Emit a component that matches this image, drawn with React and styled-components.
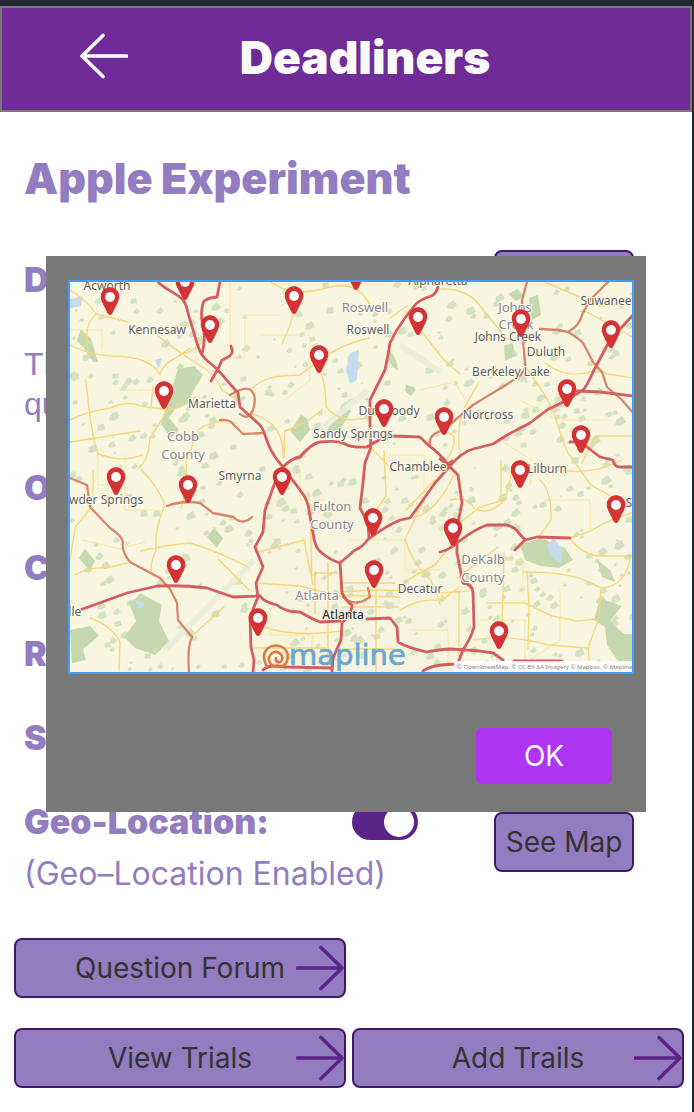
import React from "react";
import styled, { createGlobalStyle } from "styled-components";

const GlobalStyle = createGlobalStyle`
  *, *::before, *::after { box-sizing: border-box; }
  body {
    margin: 0;
    background: #222733;
    font-family: Inter, "Liberation Sans", sans-serif;
  }
`;

const Frame = styled.div`
  position: relative;
  min-height: 100vh;
  padding: 6px 2px 0 0;
  display: flex;
  flex-direction: column;
  background: #222733;
`;

const Header = styled.header`
  display: flex;
  align-items: center;
  height: 106px;
  padding: 0 88px 0 78px;
  border: 2px solid #797979;
  background: #6f2c99;
`;

const BackButton = styled.button`
  display: flex;
  padding: 0 0 6px;
  border: 0;
  background: none;
  color: #fff;
`;

const Brand = styled.div`
  flex: 1;
  padding-bottom: 4px;
  text-align: center;
  font-size: 46px;
  line-height: 56px;
  font-weight: 900;
  color: #fbfafa;
`;

const Page = styled.main`
  flex: 1;
  display: flex;
  flex-direction: column;
  padding-bottom: 24px;
  background: #fff;
  color: #937cbf;
`;

const Title = styled.h1`
  margin: 0;
  padding: 42px 24px 0;
  font-size: 43px;
  line-height: 48px;
  font-weight: 900;
`;

const Details = styled.section`
  display: flex;
  flex-direction: column;
  padding: 48px 58px 0 24px;
`;

const Row = styled.div`
  display: flex;
  align-items: center;
  justify-content: space-between;
  height: ${(p) => p.$height || 84}px;
`;

const Results = styled.div`
  padding: 4px 0 22px;
`;

const Label = styled.span`
  font-size: 34px;
  line-height: 40px;
  font-weight: 900;
`;

const Text = styled.p`
  margin: 0;
  max-width: 460px;
  font-size: 32px;
  line-height: 40px;
`;

const Summary = styled(Text)`
  padding: 34px 0 24px;
  font-family: "Liberation Sans", sans-serif;
`;

const Geo = styled.div`
  display: flex;
  justify-content: space-between;
`;

const GeoInfo = styled.div`
  width: 394px;
  display: flex;
  flex-direction: column;
  gap: 12px;
`;

const GeoLabel = styled.label`
  display: flex;
  align-items: center;
  justify-content: space-between;
  height: 40px;
`;

const Toggle = styled.input`
  appearance: none;
  display: flex;
  align-items: center;
  justify-content: flex-end;
  width: 66px;
  height: 36px;
  margin: 0;
  padding: 4px;
  border-radius: 18px;
  background: #5c2389;

  &::before {
    content: "";
    width: 30px;
    height: 30px;
    border-radius: 50%;
    background: #fff;
  }

  &:not(:checked) { justify-content: flex-start; }
`;

const ActionButton = styled.button`
  display: flex;
  align-items: center;
  justify-content: center;
  width: ${(p) => p.$width || "auto"};
  height: 60px;
  padding: 0;
  border: 2px solid #43176a;
  border-radius: 8px;
  background: #937cbf;
  color: #333;
  font: 400 28px/36px Inter, "Liberation Sans", sans-serif;

  svg { color: #5c2389; }
`;

const GeoAction = styled.div`
  padding-top: 10px;
`;

const Links = styled.nav`
  display: grid;
  grid-template-columns: 1fr 1fr;
  gap: 30px 6px;
  padding: 44px 8px 0 14px;
`;

const LinkButton = styled(ActionButton)`
  justify-content: flex-end;
  grid-column: ${(p) => (p.$start ? 1 : "auto")};
`;

const LinkText = styled.span`
  flex: 1;
  padding-left: 48px;
  text-align: center;
`;

const Dialog = styled.div`
  position: absolute;
  top: 256px;
  left: 46px;
  right: 48px;
  padding: 24px 12px 28px 22px;
  background: #797979;
`;

const MapBox = styled.div`
  border: 2px solid #409eff;

  svg {
    display: block;
    width: 100%;
    height: auto;
  }
`;

const DialogActions = styled.div`
  display: flex;
  justify-content: flex-end;
  padding: 54px 22px 0 0;
`;

const OkButton = styled.button`
  width: 136px;
  height: 56px;
  border: 0;
  border-radius: 6px;
  background: #ae35f1;
  color: #fff;
  font: 400 28px/36px Inter, "Liberation Sans", sans-serif;
`;

function Arrow({ left }) {
  return (
    <svg width="48" height="46" viewBox="0 0 48 46" fill="none" stroke="currentColor" strokeWidth="3.6" strokeLinecap="round" strokeLinejoin="round" aria-hidden="true">
      <path d={left ? "M46.5 23H2M23 2.500L2 23L23 43.500" : "M1.500 23H46M25 2.500L46 23L25 43.500"} />
    </svg>
  );
}

const highways = [
  "M158 282C166 290 178 294 183 300S187 312 190 320S197 348 202 355S212 364 218 370L238 393L240 407L260 425C268 435 264 446 283 467L300 490Q308 500 309 510L313 533Q315 549 322 553Q330 560 340 563L342 593Q346 601 352 605Q352 611 347 618L342 623L341 640L333 658L332 672",
  "M220 282L217 297Q205 298 203 303Q200 315 203 325Q206 340 202 354",
  "M211 381L218 369L222 360Q234 355 232 350L231 346",
  "M438 287Q436 294 431 296Q419 300 415 305L405 318Q396 330 390 343Q388 356 385 370L370 400L370 430L371 447L365 463L363 483L360 508L368 523L369 538Q362 548 355 550L340 563",
  "M283 467Q292 458 300 457Q312 443 320 442Q338 440 345 444T367 447Q380 438 393 436L420 437L428 445Q440 453 450 467L458 475L462 503L457 527L457 553L463 583Q472 584 473 592L474 627Q472 636 463 650L456 668",
  "M277 477L265 510L263 532L255 547L263 567L256 583L258 597L250 617L251 647L254 660L253 672",
  "M80 610L127 593L157 586Q184 585 207 588L233 597L260 596Q264 602 277 605Q285 612 300 612Q314 620 320 622L340 621M367 619L390 618L397 627L398 642Q408 648 427 652Q436 650 450 649Q477 650 493 653L503 660",
  "M370 538Q386 526 400 520L410 518L423 500L435 483L450 466Q462 452 473 449L493 444L507 435L530 423L547 410L567 400L583 390Q587 386 593 372L610 340L633 315",
  "M577 391L600 392L633 396",
  "M570 442Q580 441 587 447L600 457L613 460Q614 468 622 467L633 467",
  "M440 552Q449 550 457 543Q473 530 487 525L507 525Q516 528 518 532L525 540L537 537L570 538M515 550L525 540",
  "M263 670Q268 664 286 667L332 668M423 671Q433 664 458 664M514 661H562",
  "M440 470L452 461M440 459L450 466",
];

const mainRoads = [
  "M230 395Q243 387 249 389Q258 394 253 410Q248 421 240 414",
  "M220 420Q229 419 232 423L243 434L264 433",
  "M540 329L558 330L568 332Q580 325 582 315L590 300L608 282M568 332Q581 340 583 343L593 362L602 372L607 387L622 400L633 413",
  "M447 427L473 405L517 378Q527 370 525 363L523 340L522 300L527 282",
  "M70 478L87 485L90 507L110 528Q122 536 123 542Q121 551 130 562L160 578L170 589L177 603L178 620L192 637Q187 647 189 672",
  "M167 506Q183 500 200 503L213 513L233 517Q243 526 252 517",
  "M343 597Q355 608 370 597L368 588",
  "M444 430Q428 434 430 444",
];

const countyRoads = [
  "M70 290Q89 302 96 314L128 322M96 314Q83 326 88 348",
  "M158 336Q181 354 204 368Q216 376 222 390L240 402M180 355Q196 350 202 342",
  "M160 374Q164 364 172 360T190 348",
  "M70 420Q85 412 110 408Q128 400 140 406L168 410Q184 408 197 396",
  "M168 410L150 438Q148 462 139 467Q157 485 165 505M153 386L151 407",
  "M181 508Q188 480 186 462L198 430Q215 418 236 423",
  "M165 505Q154 530 156 550Q148 567 153 576",
  "M86 380Q91 435 98 454Q122 463 142 455",
  "M70 345Q84 353 108 356Q150 355 160 375",
  "M75 575Q88 567 106 568L128 563M141 551Q165 545 190 543Q222 553 248 567",
  "M250 390Q263 377 282 376L300 375Q310 367 321 359Q340 345 369 338",
  "M321 373Q326 387 326 407Q335 418 350 420L369 418",
  "M271 282Q292 298 326 288T373 311M282 344Q298 309 297 290",
  "M390 318L407 306M406 312L444 360L460 374",
  "M252 414Q285 423 283 458",
  "M285 431Q306 424 322 410M285 431L284 457",
  "M441 289Q470 288 483 310L506 338Q512 341 520 338",
  "M545 282L568 292L600 306L633 303M583 310L633 337",
  "M523 364Q540 385 553 410Q560 434 568 453L591 485L614 498",
  "M461 458Q455 435 464 408L479 382M440 470Q464 437 447 432",
  "M545 363Q566 380 594 371Q607 374 633 378",
  "M371 448L388 465M424 500L405 539Q413 565 431 580L440 604",
  "M405 518Q432 521 454 475M454 541L435 565Q405 579 398 590",
  "M450 500Q468 496 474 508Q490 517 505 499L511 475L523 463",
  "M501 461V501L480 507L457 525M539 479Q552 490 551 520L538 538",
  "M570 538L588 532L607 522L633 512M570 538Q580 553 597 556H633",
  "M631 555Q626 587 601 588L599 618L588 648L590 671",
  "M523 572Q565 572 584 580L601 588",
  "M504 553L502 632M457 578L498 547M439 593L468 591",
  "M487 603H525L552 616L577 621L597 619",
  "M527 571L529 606L528 649M474 640Q510 634 548 645L588 648",
  "M400 610Q422 597 441 601L458 588M459 592V670",
  "M256 583L300 586L343 597M310 504L312 583",
  "M341 560V592L374 590L410 591M376 592V671",
  "M341 595L400 597M341 583H395M342 607H398",
  "M328 563V668M337 573H315V614",
  "M255 648H325M258 625Q290 638 342 631M343 649H395",
  "M406 510L435 480M384 451L386 496L368 522",
  "M258 552L304 540L313 585",
  "M93 470V505L75 528L70 560M70 442L140 431",
  "M90 618Q112 626 120 642L119 671M218 559L249 590M192 636L224 607",
  "M540 465Q584 480 622 460M582 463L595 436H633",
];

const forests = [
  "M178 369L194 366L203 375L195 388L188 403L176 408L169 418L179 430L171 438L161 424L168 401Z",
  "M81 329L91 339L98 362H93L84 348L77 341Z",
  "M345 405L331 420L327 432L340 430L351 411Z",
  "M301 415L290 431L300 442L310 430L307 418Z",
  "M390 350L396 360L398 371L387 360Z",
  "M406 384L416 389L411 396L405 391Z",
  "M129 603L142 594L162 605L159 621L169 641L155 655L135 648L124 637L136 621Z",
  "M520 545L540 538L565 548L573 560L559 568L541 566L525 560Z",
  "M600 598L622 606L610 621L624 634H633V662L618 661L607 645L605 627L594 620Z",
  "M85 549L95 561L90 571L79 558Z",
  "M508 294L517 289L524 296L516 301Z",
  "M504 346L513 343L515 356L505 361Z",
  "M597 560L610 570L615 582L602 577Z",
  "M70 630L90 626L99 636L83 649L86 660L72 663Z",
  "M529 298L538 295L541 315L532 320Z",
  "M214 528L223 538L217 548L207 537Z",
];

const lakes = [
  "M70 299L83 296L81 306L70 308Z",
  "M350 353L359 350L357 380L350 384L346 370Z",
  "M553 538L562 548L561 563L553 559L547 546Z",
  "M134 600L145 603L141 609Z",
  "M155 360L162 358L159 369Z",
];

// Small woods are strewn over the map by a fixed sequence, so every render is alike.
function makeWoods(count) {
  let seed = 17;
  const next = () => {
    seed = (seed * 16807) % 2147483647;
    return seed / 2147483647;
  };
  return Array.from({ length: count }, () => {
    const x = Math.round(70 + next() * 562);
    const y = Math.round(282 + next() * 390);
    const a = Math.round(1 + next() * 5);
    const b = Math.round(1 + next() * 3);
    return `M${x} ${y}l${a} ${-b}l${b} ${a}l${-a} ${b}l${-b - 1} ${-1}z`;
  }).join("");
}

const woods = makeWoods(560);

const pins = [
  [110, 314], [185, 299], [210, 342], [164, 408], [294, 313], [356, 289], [418, 334], [319, 372],
  [384, 426], [444, 434], [521, 336], [611, 347], [567, 406], [581, 452], [520, 487], [616, 522],
  [453, 545], [499, 648], [116, 494], [188, 502], [176, 582], [282, 494], [258, 635], [373, 535], [374, 587],
];

const towns = [
  ["Acworth", 107, 290], ["Kennesaw", 157, 334], ["Marietta", 212, 408], ["Roswell", 368, 334],
  ["Alpharetta", 438, 285], ["Sandy Springs", 353, 438], ["Dunwoody", 389, 415], ["Chamblee", 418, 471],
  ["Smyrna", 240, 480], ["Powder Springs", 99, 504], ["Suwanee", 606, 305], ["Johns Creek", 508, 341],
  ["Duluth", 546, 356], ["Berkeley Lake", 511, 376], ["Norcross", 488, 419], ["Lilburn", 547, 473],
  ["Decatur", 420, 593], ["Snellville", 650, 507], ["Douglasville", 47, 616],
];

const counties = [
  ["Roswell", 365, 312], ["Johns", 515, 312], ["Creek", 516, 329], ["Cobb", 183, 441], ["County", 183, 459],
  ["Fulton", 332, 511], ["County", 332, 529], ["DeKalb", 483, 564], ["County", 483, 582], ["Atlanta", 317, 600],
];

function AtlantaMap() {
  return (
    <svg viewBox="70 282 562 390" role="img" aria-label="Map of trial locations around Atlanta">
      <rect x="70" y="282" width="562" height="390" fill="#f8f6e1" />
      <path d="M370 450L450 467L462 503L463 583L474 627L458 672H254L256 583L265 510L283 467L320 442Z" fill="#f6f3de" />
      <path d={woods} fill="#c9dbb6" opacity="0.75" />
      <path d={forests.join("")} fill="#c6d8ae" />
      <path d="M254 560L205 610L165 650M368 390L320 430M440 372L400 345" fill="none" stroke="#ebeedb" strokeWidth="6" />
      <path d={lakes.join("")} fill="#c5dcec" />
      <g fill="none" strokeLinecap="round" strokeLinejoin="round">
        <path d="M70 330H102V350M230 282V358H245V315M240 315H280M110 282V310M120 390H165M98 454V485H112M83 540L120 549L145 542M260 335H310V380L285 400M300 470V500H326M390 455H424V505M420 390L455 382L477 420M520 400L558 420H610M500 440L535 462L530 485M545 500H590V530M480 560H523V595M480 620H525V660M560 590V640L530 660M410 630H448V665M270 610V635H312V660M350 540H405V570H440M125 455V510H160" stroke="#fae79c" strokeWidth="1" />
        <path d={countyRoads.join("")} stroke="#f6d77c" strokeWidth="1.400" />
        <path d={mainRoads.join("")} stroke="#d9856a" strokeWidth="2.300" />
        <path d={highways.join("")} stroke="#d45d60" strokeWidth="2.800" />
      </g>
      <g fontFamily='"Noto Sans", "Open Sans", sans-serif' textAnchor="middle" stroke="#fbf9e9" strokeWidth="2" paintOrder="stroke" strokeLinejoin="round">
        <g fontSize="13" fill="#89899a">
          {counties.map(([name, x, y]) => <text key={`${name}${x}${y}`} x={x} y={y}>{name}</text>)}
        </g>
        <g fontSize="12" fill="#5f5f66">
          {towns.map(([name, x, y]) => <text key={name} x={x} y={y}>{name}</text>)}
        </g>
        <text x="343" y="619" fontSize="12" fontWeight="500" fill="#333">Atlanta</text>
      </g>
      {pins.map(([x, y]) => (
        <g key={`${x}-${y}`} transform={`translate(${x} ${y})`}>
          <path d="M-2 0L-8 -12Q-10 -16 -9 -20C-6 -29 6 -29 9 -20Q10 -16 8 -12L2 0Q0 2 -2 0Z" fill="#d43235" />
          <circle cy="-17" r="4.900" fill="#fff" />
        </g>
      ))}
      <path d="M267 667C258 650 272 642 282 647C291 652 289 665 280 667C271 668 266 660 271 654C276 649 284 654 282 660C280 664 275 662 276 658" fill="none" stroke="#dc7a3c" strokeWidth="2.500" strokeLinecap="round" />
      <text x="289" y="665" fontFamily='"DejaVu Sans", sans-serif' fontSize="29" fill="#5b9fd0" stroke="#5b9fd0" strokeWidth="0.700" opacity="0.9">mapline</text>
      <rect x="454" y="661" width="178" height="11" fill="#fff" opacity="0.85" />
      <text x="457" y="669" fontFamily='"Noto Sans", sans-serif' fontSize="6" fill="#85858c">© OpenStreetMap, © CC-BY-SA Imagery © Mapbox, © Mapline</text>
    </svg>
  );
}

export default function App() {
  return (
    <>
      <GlobalStyle />
      <Frame>
        <Header>
          <BackButton aria-label="Back"><Arrow left /></BackButton>
          <Brand>Deadliners</Brand>
        </Header>
        <Page>
          <Title>Apple Experiment</Title>
          <Details>
            <Row $height={60}>
              <Label>Description:</Label>
              <ActionButton $width="140px">Edit</ActionButton>
            </Row>
            <Summary>This experiment compares the quality of apples.</Summary>
            <Row $height={80}><Label>Owner:</Label></Row>
            <Row $height={80}><Label>Crowd:</Label></Row>
            <Results>
              <Row><Label>Region:</Label></Row>
              <Row><Label>Status:</Label></Row>
            </Results>
            <Geo>
              <GeoInfo>
                <GeoLabel>
                  <Label>Geo-Location:</Label>
                  <Toggle type="checkbox" role="switch" defaultChecked />
                </GeoLabel>
                <Text>(Geo–Location Enabled)</Text>
              </GeoInfo>
              <GeoAction><ActionButton $width="140px">See Map</ActionButton></GeoAction>
            </Geo>
          </Details>
          <Links>
            <LinkButton $start><LinkText>Question Forum</LinkText><Arrow /></LinkButton>
            <LinkButton $start><LinkText>View Trials</LinkText><Arrow /></LinkButton>
            <LinkButton><LinkText>Add Trails</LinkText><Arrow /></LinkButton>
          </Links>
        </Page>
        <Dialog role="dialog" aria-label="Trial locations">
          <MapBox><AtlantaMap /></MapBox>
          <DialogActions><OkButton>OK</OkButton></DialogActions>
        </Dialog>
      </Frame>
    </>
  );
}
